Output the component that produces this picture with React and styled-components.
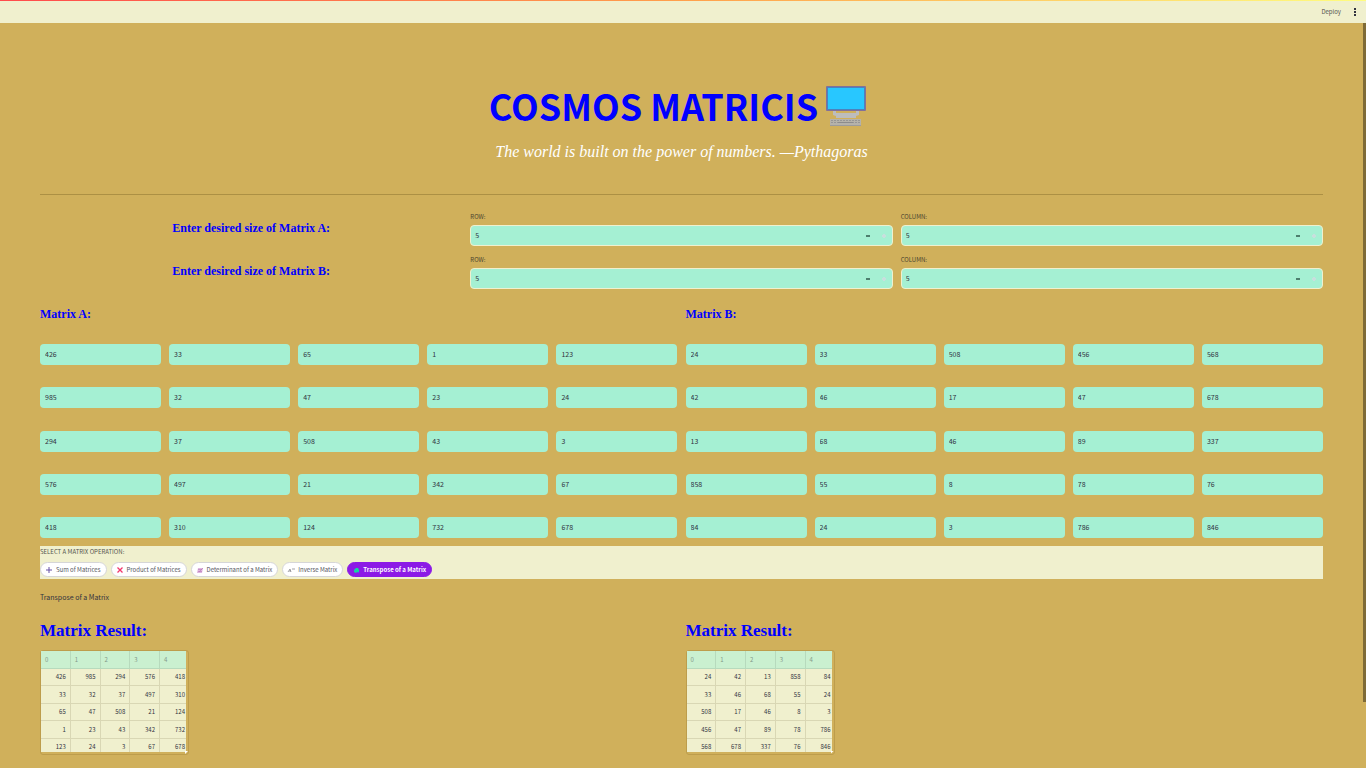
import React from "react";
import styled, { createGlobalStyle } from "styled-components";

const sans = '"Noto Sans CJK SC", "Open Sans", sans-serif';
const serif = '"Liberation Serif", "Times New Roman", serif';

const GlobalStyle = createGlobalStyle`
  *, *::before, *::after { box-sizing: border-box; }
  body { margin: 0; background: #d0b05b; color: #31333f; font-family: ${sans}; font-size: 7px; }
  h1, h2, h3, p { margin: 0; }
  button, input { font: inherit; color: inherit; }
`;

const Page = styled.div`
  height: 100vh;
  display: flex;
  flex-direction: column;
  overflow: hidden;
`;

const Header = styled.header`
  flex: none;
  height: 23px;
  border-top: 1px solid transparent;
  background: linear-gradient(#f0f0ce, #f0f0ce) padding-box,
    linear-gradient(90deg, #ff4b4b, #ffa04b 50%, #fffd80) border-box;
  display: flex;
  align-items: center;
  justify-content: flex-end;
  gap: 11px;
  padding-right: 8px;
`;

const HeaderButton = styled.button`
  border: 0;
  padding: 0;
  background: none;
  font-size: 6px;
  line-height: 12px;
  color: #53544f;
  display: flex;
`;

const Body = styled.div`
  flex: 1;
  min-height: 0;
  display: flex;
`;

const Main = styled.main`
  flex: 1;
  min-width: 0;
  padding: 60px 40px 0;
  overflow: hidden;
`;

const ScrollTrack = styled.div`
  width: 3px;
  flex: none;
`;

const ScrollThumb = styled.div`
  height: 91.2%;
  background: #7f6b37;
`;

const Title = styled.h1`
  display: flex;
  justify-content: center;
  align-items: center;
  gap: 8px;
  height: 46px;
  color: #0000ff;
  font-size: 36px;
  line-height: 44px;
  font-weight: 700;
  padding-right: 8px;
`;

const TitleText = styled.span`
  padding-bottom: 2px;
`;

const Quote = styled.p`
  margin-top: 8px;
  text-align: center;
  color: #fff;
  font: italic 16px/30px "Z003", "URW Chancery L", ${serif};
`;

const Rule = styled.hr`
  border: 0;
  height: 1px;
  margin: 27px 0 16px;
  background: #ac9044;
`;

const SizeRow = styled.div`
  display: grid;
  grid-template-columns: repeat(3, 1fr);
  gap: 8px;
  height: 35px;
  margin-bottom: 8px;
`;

const Heading = styled.h3`
  color: #0000ff;
  font: 700 12px/18px ${serif};
  text-align: ${(p) => (p.$center ? "center" : "left")};
  padding-top: 8px;
`;

const Field = styled.div`
  display: flex;
  flex-direction: column;
  justify-content: space-between;
`;

const Label = styled.label`
  font-size: 6px;
  line-height: 12px;
  color: #4b452f;
`;

const NumberBox = styled.div`
  display: flex;
  height: 21px;
  border: 1px solid #f0f0ce;
  border-radius: 4px;
  background: #a5f0d3;
  overflow: hidden;
`;

const NumberInput = styled.input`
  flex: 1;
  min-width: 0;
  border: 0;
  outline: 0;
  padding: 0 4px 1px;
  background: none;
`;

const Step = styled.button`
  width: 16px;
  border: 0;
  padding: 0;
  background: none;
  display: grid;
  place-items: center;
`;

const Halves = styled.div`
  display: grid;
  grid-template-columns: 1fr 1fr;
  gap: 8px;
`;

const Cells = styled.div`
  display: grid;
  grid-template-columns: repeat(5, 1fr);
  column-gap: 8px;
  align-content: space-between;
  height: 194px;
  margin-top: 21px;
`;

const CellInput = styled.input`
  width: 100%;
  height: 21px;
  border: 0;
  border-radius: 4px;
  padding: 0 5px 1px;
  background: #a5f0d3;
`;

const Operations = styled.section`
  margin-top: 8px;
  height: 33px;
  background: #f0f0ce;
  display: flex;
  flex-direction: column;
  gap: 4px;
`;

const OperationsLabel = styled.span`
  font-size: 6px;
  line-height: 12px;
  color: #56574f;
`;

const Pills = styled.div`
  display: flex;
  gap: 4px;
`;

const Pill = styled.button`
  display: flex;
  align-items: center;
  gap: 3px;
  height: 15px;
  border: 1px solid ${(p) => (p.$active ? "#8c1ae6" : "#d6d6d8")};
  border-radius: 8px;
  padding: 0 5px 0 4px;
  background: ${(p) => (p.$active ? "#8c1ae6" : "#fff")};
  color: ${(p) => (p.$active ? "#fff" : "#555660")};
  font-size: 6px;
  font-weight: ${(p) => (p.$active ? 700 : 400)};
  white-space: nowrap;
`;

const Chosen = styled.p`
  margin: 11px 0 15px;
  line-height: 14px;
`;

const ResultTitle = styled.h2`
  color: #0000ff;
  font: 700 17px/24px ${serif};
  margin-bottom: 7px;
`;

const Frame = styled.div`
  position: relative;
  width: 149px;
  height: 105px;
  border: 1px solid #bd9d4c;
  border-radius: 3px;
  padding: 0 2px 2px 0;
`;

const Clip = styled.div`
  height: 101px;
  overflow: hidden;
`;

const Corner = styled.span`
  position: absolute;
  right: 0;
  bottom: 0;
  width: 3px;
  height: 3px;
  background: #fff;
  clip-path: polygon(0 0, 100% 0, 0 100%);
`;

const Table = styled.table`
  width: 100%;
  table-layout: fixed;
  border-collapse: separate;
  border-spacing: 0;
  background: #f0f0ce;
  font-size: 6px;
  th, td {
    height: 18px;
    padding: 0 4px;
    line-height: 12px;
    border-right: 1px solid #d9d7b4;
    border-bottom: 1px solid #d9d7b4;
  }
  th {
    background: #caf0d0;
    border-color: #b7dabd;
    color: #84998a;
    font-weight: 400;
    text-align: left;
  }
  tbody tr:nth-child(odd) td { height: 17px; }
  td { text-align: right; }
  th:last-child, td:last-child { border-right: 0; width: 26px; padding-right: 1px; }
`;

const A = [
  [426, 33, 65, 1, 123],
  [985, 32, 47, 23, 24],
  [294, 37, 508, 43, 3],
  [576, 497, 21, 342, 67],
  [418, 310, 124, 732, 678],
];
const B = [
  [24, 33, 508, 456, 568],
  [42, 46, 17, 47, 678],
  [13, 68, 46, 89, 337],
  [858, 55, 8, 78, 76],
  [84, 24, 3, 786, 846],
];
const transpose = (m) => m[0].map((_, c) => m.map((row) => row[c]));

const Computer = () => (
  <svg width="40" height="40" viewBox="0 0 40 40" aria-hidden="true">
    <rect x="0" y="0" width="40" height="25" rx="1" fill="#82709a" />
    <rect x="1" y="1" width="38" height="23" fill="#4a83bd" />
    <rect x="2" y="2" width="36" height="21" fill="#28c7ff" />
    <path d="M7 25h3v2h20v-2h3v4l-3 1v2H10v-2l-3-1z" fill="#bdbdbd" />
    <rect x="4" y="33" width="31" height="7" fill="#b5b2aa" />
    <path d="M5 34.5h29M5 36.5h29" stroke="#969696" strokeDasharray="2 1" />
    <path d="M12 36.5h15" stroke="#8c8c8c" />
    <path d="M4 39.5h31" stroke="#9c9c9c" />
  </svg>
);

const icons = {
  sum: <path d="M4 1v6M1 4h6" stroke="#6651a6" strokeWidth="1" />,
  product: <path d="M1.5 1.5l5 5M6.5 1.5l-5 5" stroke="#f2376b" strokeWidth="1.3" />,
  determinant: (
    <>
      <path d="M2 2h5L6 7H1z" fill="#dfb6df" />
      <path d="M2 3.5h4M2 5.5h4M3 6l4-4" stroke="#b577b5" strokeWidth=".6" />
    </>
  ),
  inverse: (
    <path d="M1 6l2-3 1 3M2 5h2M5 3h1M7 2v2" stroke="#7d7d83" strokeWidth=".7" fill="none" />
  ),
  transpose: (
    <>
      <path d="M4 2h2l1 2v2H5L4 7 2 6V4z" fill="#13d99a" />
      <path d="M2 4h2M5 6h2" stroke="#2c9be5" strokeWidth=".8" />
    </>
  ),
};

const PillIcon = ({ name }) => (
  <svg width="8" height="8" viewBox="0 0 8 8" fill="none" aria-hidden="true">
    {icons[name]}
  </svg>
);

const SizeField = ({ id, label }) => (
  <Field>
    <Label htmlFor={id}>{label}</Label>
    <NumberBox>
      <NumberInput id={id} defaultValue="5" />
      <Step aria-label="Decrease">
        <svg width="4" height="2"><rect width="4" height="2" fill="#4d7f6e" /></svg>
      </Step>
      <Step aria-label="Increase">
        <svg width="4" height="4"><path d="M2 0v4M0 2h4" stroke="#c8dfdd" strokeWidth="2" /></svg>
      </Step>
    </NumberBox>
  </Field>
);

const SizeControls = ({ name }) => (
  <SizeRow>
    <Heading $center>Enter desired size of Matrix {name}:</Heading>
    <SizeField id={`row-${name}`} label="ROW:" />
    <SizeField id={`column-${name}`} label="COLUMN:" />
  </SizeRow>
);

const Matrix = ({ name, data }) => (
  <section>
    <Heading>Matrix {name}:</Heading>
    <Cells>
      {data.map((row, r) =>
        row.map((v, c) => (
          <CellInput key={`${r}-${c}`} aria-label={`${name} ${r} ${c}`} defaultValue={v} />
        ))
      )}
    </Cells>
  </section>
);

const Result = ({ data }) => (
  <section>
    <ResultTitle>Matrix Result:</ResultTitle>
    <Frame>
      <Clip>
        <Table>
          <thead>
            <tr>{data[0].map((_, i) => <th key={i}>{i}</th>)}</tr>
          </thead>
          <tbody>
            {data.map((row, r) => (
              <tr key={r}>{row.map((v, c) => <td key={c}>{v}</td>)}</tr>
            ))}
          </tbody>
        </Table>
      </Clip>
      <Corner />
    </Frame>
  </section>
);

const operations = [
  ["sum", "Sum of Matrices"],
  ["product", "Product of Matrices"],
  ["determinant", "Determinant of a Matrix"],
  ["inverse", "Inverse Matrix"],
  ["transpose", "Transpose of a Matrix"],
];

export default function App() {
  return (
    <Page>
      <GlobalStyle />
      <Header>
        <HeaderButton>Deploy</HeaderButton>
        <HeaderButton aria-label="Menu">
          <svg width="6" height="8" viewBox="0 0 6 8">
            <path d="M2 0h2v2H2zM2 3h2v2H2zM2 6h2v2H2z" fill="#31333f" />
          </svg>
        </HeaderButton>
      </Header>
      <Body>
        <Main>
          <Title><TitleText>COSMOS MATRICIS</TitleText><Computer /></Title>
          <Quote>The world is built on the power of numbers. —Pythagoras</Quote>
          <Rule />
          <SizeControls name="A" />
          <SizeControls name="B" />
          <Halves>
            <Matrix name="A" data={A} />
            <Matrix name="B" data={B} />
          </Halves>
          <Operations>
            <OperationsLabel>SELECT A MATRIX OPERATION:</OperationsLabel>
            <Pills>
              {operations.map(([key, text]) => (
                <Pill key={key} $active={key === "transpose"}>
                  <PillIcon name={key} />
                  {text}
                </Pill>
              ))}
            </Pills>
          </Operations>
          <Chosen>Transpose of a Matrix</Chosen>
          <Halves>
            <Result data={transpose(A)} />
            <Result data={transpose(B)} />
          </Halves>
        </Main>
        <ScrollTrack><ScrollThumb /></ScrollTrack>
      </Body>
    </Page>
  );
}
